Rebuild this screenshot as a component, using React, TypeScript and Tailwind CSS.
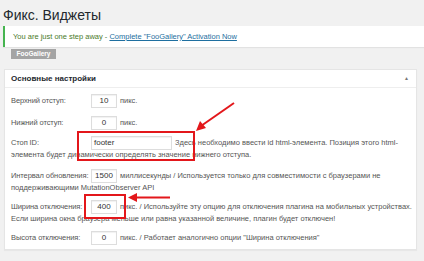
import React from "react";

const font = { fontFamily: '"Liberation Sans", Arial, sans-serif' };

// строка настроек: подпись, поле, пояснение
const Row = ({
  label,
  value,
  after,
  wide,
  className,
}: {
  label: string;
  value: string;
  after: string;
  wide?: boolean;
  className?: string;
}) => (
  <div className={`flex items-center h-[14px] ${className ?? ""}`}>
    <span className="w-[80px] shrink-0 text-[#555] tracking-[-0.1px]">{label}</span>
    <span
      className={`h-[14px] bg-white border border-[#ddd] shadow-[inset_0_1px_1px_rgba(0,0,0,0.06)] flex items-center text-[8px] text-[#333] ${
        wide ? "w-[81px] pl-[2px] justify-start" : "w-[26px] justify-center"
      }`}
    >
      {value}
    </span>
    <span className="ml-[3px] whitespace-nowrap text-[#555]">{after}</span>
  </div>
);

export default function App() {
  return (
    <div
      className="w-[424px] h-[261px] bg-[#f1f1f1] overflow-hidden relative text-[7.5px]"
      style={font}
    >
      <h1 className="pl-[3px] pt-[6px] text-[14px] leading-[18px] text-[#23282d]">
        Фикс. Виджеты
      </h1>

      <div className="mt-[2px] ml-[3px] h-[21px] bg-white border-l-[2px] border-[#46b450] shadow-[0_1px_1px_rgba(0,0,0,0.06)] flex items-center pl-[8px] text-[#4a7a2a]">
        You are just one step away -&nbsp;
        <span className="text-[#1e6fa0] underline">
          Complete "FooGallery" Activation Now
        </span>
      </div>

      <div className="ml-[11px] mt-[2px] w-[45px] h-[10px] bg-[#a4a4a4] text-white font-bold text-[6.5px] flex items-center justify-center">
        FooGallery
      </div>

      <div className="mt-[10px] ml-[4px] w-[413px] bg-white border border-[#e5e5e5] shadow-[0_1px_1px_rgba(0,0,0,0.04)]">
        <div className="h-[18px] border-b border-[#eee] flex items-center justify-between pl-[6px] pr-[7px]">
          <span className="text-[8px] font-semibold text-[#23282d]">Основные настройки</span>
          <span className="text-[5px] text-[#777]">▲</span>
        </div>

        <div className="pl-[6px] pt-[6px] pb-[4px]">
          <Row label="Верхний отступ:" value="10" after="пикс." />
          <Row label="Нижний отступ:" value="0" after="пикс." className="mt-[8px]" />
          <Row
            label="Стоп ID:"
            value="footer"
            wide
            after="Здесь необходимо ввести id html-элемента. Позиция этого html-"
            className="mt-[6px]"
          />
          <div className="leading-[10px] text-[#555]">
            элемента будет динамически определять значение нижнего отступа.
          </div>
          <Row
            label="Интервал обновления:"
            value="1500"
            after="миллисекунды / Используется только для совместимости с браузерами не"
            className="mt-[9px]"
          />
          <div className="leading-[9px] text-[#555]">поддерживающими MutationObserver API</div>
          <Row
            label="Ширина отключения:"
            value="400"
            after="пикс. / Используйте эту опцию для отключения плагина на мобильных устройствах."
            className="mt-[8px]"
          />
          <div className="leading-[9px] text-[#555]">
            Если ширина окна браузера меньше или равна указанной величине, плагин будет отключен!
          </div>
          <Row
            label="Высота отключения:"
            value="0"
            after='пикс. / Работает аналогично опции "Ширина отключения"'
            className="mt-[8px]"
          />
        </div>
      </div>

      {/* красные рамки и стрелки поверх */}
      <div className="absolute left-[77px] top-[131px] w-[118px] h-[30px] border-[2px] border-[#e3171b]" />
      <div className="absolute left-[84px] top-[194px] w-[42px] h-[25px] border-[2px] border-[#e3171b]" />
      <svg className="absolute left-0 top-0" width="424" height="261">
        <line x1="234" y1="103" x2="201" y2="126" stroke="#e3171b" strokeWidth="2" />
        <polygon points="196,131 200,121 206,128" fill="#e3171b" />
        <line x1="170" y1="197.5" x2="136" y2="197.5" stroke="#e3171b" strokeWidth="2" />
        <polygon points="128,197.5 137,193 137,202" fill="#e3171b" />
      </svg>
    </div>
  );
}
